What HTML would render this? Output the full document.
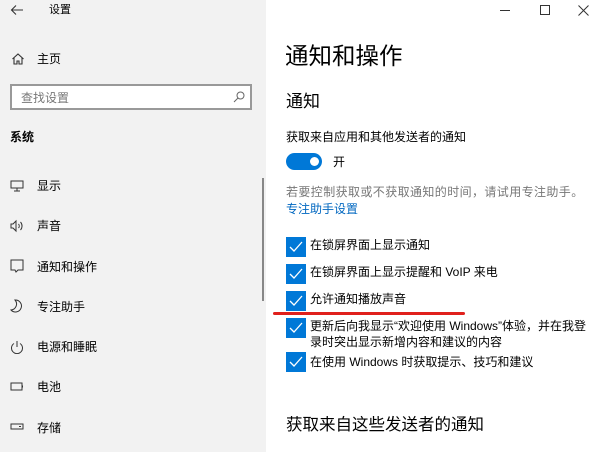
<!DOCTYPE html>
<html><head><meta charset="utf-8"><style>
*{margin:0;padding:0;box-sizing:border-box}
body{width:600px;height:452px;overflow:hidden;background:#fff;font-family:"Liberation Sans","Noto Sans CJK SC",sans-serif;color:#000;position:relative}
.l{position:absolute;left:0;top:0;width:266px;height:452px;background:#f2f2f2}
.a{position:absolute;white-space:nowrap;line-height:1}
.t13{font-size:12px}
svg{position:absolute}
.cb{position:absolute;left:286px;width:20px;height:20px;background:#0078d7}
.cb svg{left:3px;top:4px}
</style></head><body>
<div class="l"></div>
<svg style="left:10px;top:4px" width="14" height="12" viewBox="0 0 14 12"><path d="M13 6H2M6 1.5L1.5 6 6 10.5" fill="none" stroke="#333" stroke-width="1.1"/></svg>
<div class="a" style="left:49px;top:5px;font-size:11px">设置</div>
<svg style="left:11px;top:52px" width="14" height="14" viewBox="0 0 14 14"><path d="M1.5 7L7 2l5.5 5M3 6v6h3V9h2v3h3V6" fill="none" stroke="#333" stroke-width="1.1"/></svg>
<div class="a t13" style="left:37px;top:53px">主页</div>
<div style="position:absolute;left:10px;top:84px;width:242px;height:26px;border:2px solid #999;background:#fff"></div>
<div class="a t13" style="left:21px;top:92px;color:#777">查找设置</div>
<svg style="left:233px;top:91px" width="12" height="12" viewBox="0 0 12 12"><circle cx="7.5" cy="4.5" r="3.5" fill="none" stroke="#666"/><path d="M5 7L1 11" stroke="#666"/></svg>
<div class="a t13" style="left:10px;top:131px;font-weight:bold">系统</div>
<svg style="left:10px;top:180px" width="14" height="12" viewBox="0 0 14 12"><path d="M1 1h12v7H1zM7 8v3M4 11h6" fill="none" stroke="#333"/></svg>
<div class="a t13" style="left:37px;top:180px">显示</div>
<svg style="left:10px;top:219px" width="14" height="14" viewBox="0 0 14 14"><path d="M1 5h2l3-3v10L3 9H1zM8.5 5a3 3 0 0 1 0 4M10.5 3a6 6 0 0 1 0 8" fill="none" stroke="#333"/></svg>
<div class="a t13" style="left:37px;top:220px">声音</div>
<svg style="left:10px;top:259px" width="14" height="14" viewBox="0 0 14 14"><path d="M1 1h12v10H8l-2 2-1-2H1z" fill="none" stroke="#333"/></svg>
<div class="a t13" style="left:37px;top:261px">通知和操作</div>
<svg style="left:10px;top:299px" width="14" height="14" viewBox="0 0 14 14"><path d="M5 1a6 6 0 1 1-4 10a6 6 0 0 0 4-10z" fill="none" stroke="#333"/></svg>
<div class="a t13" style="left:37px;top:301px">专注助手</div>
<svg style="left:10px;top:340px" width="14" height="14" viewBox="0 0 14 14"><path d="M4 3.5a5.5 5.5 0 1 0 6 0M7 1v6" fill="none" stroke="#333"/></svg>
<div class="a t13" style="left:37px;top:341px">电源和睡眠</div>
<svg style="left:10px;top:382px" width="14" height="10" viewBox="0 0 14 10"><path d="M1 1h11v7H1zM12.5 3.5v2" fill="none" stroke="#333"/></svg>
<div class="a t13" style="left:37px;top:381px">电池</div>
<svg style="left:10px;top:423px" width="14" height="8" viewBox="0 0 14 8"><path d="M1 1h12v5H1zM9 3.5h2" fill="none" stroke="#333"/></svg>
<div class="a t13" style="left:37px;top:422px">存储</div>
<div style="position:absolute;left:262px;top:178px;width:2px;height:123px;background:#888"></div>

<div class="a" style="left:500px;top:10px;width:10px;height:1px;background:#333"></div>
<div style="position:absolute;left:540px;top:5px;width:10px;height:10px;border:1px solid #333"></div>
<svg style="left:578px;top:5px" width="11" height="11" viewBox="0 0 11 11"><path d="M.5.5l10 10M10.5.5l-10 10" stroke="#333"/></svg>

<div class="a" style="left:285px;top:45px;font-size:23.5px">通知和操作</div>
<div class="a" style="left:286px;top:93px;font-size:17px">通知</div>
<div class="a t13" style="left:286px;top:131px">获取来自应用和其他发送者的通知</div>
<div style="position:absolute;left:286px;top:153px;width:36px;height:17px;border-radius:9px;background:#0078d7"></div>
<div style="position:absolute;left:310px;top:157px;width:9px;height:9px;border-radius:50%;background:#fff"></div>
<div class="a t13" style="left:333px;top:156px">开</div>
<div class="a t13" style="left:286px;top:186px;color:#777;letter-spacing:0.4px">若要控制获取或不获取通知的时间，请试用专注助手。</div>
<div class="a t13" style="left:286px;top:203px;color:#0067c0">专注助手设置</div>

<div class="cb" style="top:237px"><svg width="14" height="12" viewBox="0 0 14 12"><path d="M1 6l4 4 8-9" fill="none" stroke="#fff" stroke-width="1.3"/></svg></div>
<div class="a t13" style="left:310px;top:239px">在锁屏界面上显示通知</div>
<div class="cb" style="top:264px"><svg width="14" height="12" viewBox="0 0 14 12"><path d="M1 6l4 4 8-9" fill="none" stroke="#fff" stroke-width="1.3"/></svg></div>
<div class="a t13" style="left:310px;top:266px">在锁屏界面上显示提醒和 VoIP 来电</div>
<div class="cb" style="top:291px"><svg width="14" height="12" viewBox="0 0 14 12"><path d="M1 6l4 4 8-9" fill="none" stroke="#fff" stroke-width="1.3"/></svg></div>
<div class="a t13" style="left:310px;top:293px">允许通知播放声音</div>
<div style="position:absolute;left:273px;top:312px;width:192px;height:3px;background:#e0201c;border-radius:2px"></div>
<div class="cb" style="top:318px"><svg width="14" height="12" viewBox="0 0 14 12"><path d="M1 6l4 4 8-9" fill="none" stroke="#fff" stroke-width="1.3"/></svg></div>
<div class="a t13" style="left:310px;top:320px">更新后向我显示“欢迎使用 Windows”体验，并在我登</div>
<div class="a t13" style="left:310px;top:336px">录时突出显示新增内容和建议的内容</div>
<div class="cb" style="top:352px"><svg width="14" height="12" viewBox="0 0 14 12"><path d="M1 6l4 4 8-9" fill="none" stroke="#fff" stroke-width="1.3"/></svg></div>
<div class="a t13" style="left:310px;top:356px">在使用 Windows 时获取提示、技巧和建议</div>
<div class="a" style="left:286px;top:417px;font-size:16.5px">获取来自这些发送者的通知</div>
</body></html>
